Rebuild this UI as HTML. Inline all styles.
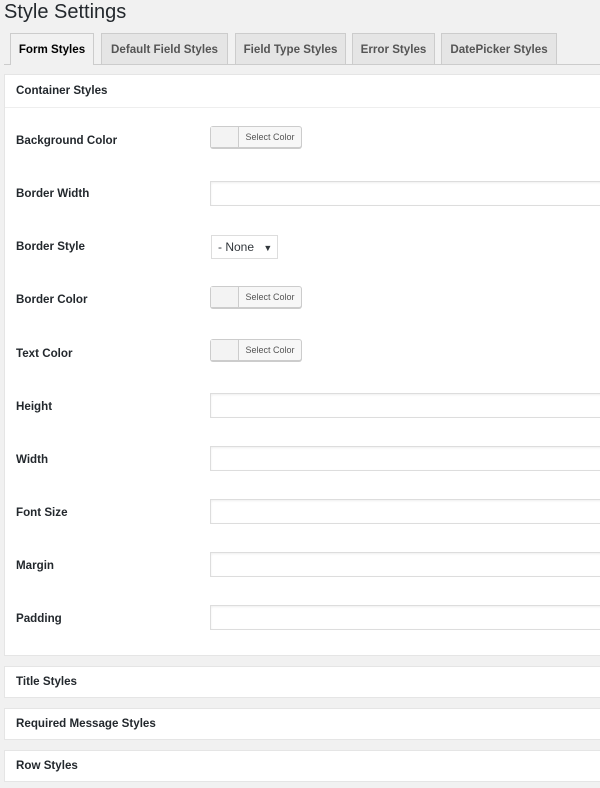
<!DOCTYPE html>
<html><head><style>
*{box-sizing:border-box;margin:0;padding:0}
body{width:600px;height:788px;overflow:hidden;background:#f1f1f1;font-family:"Liberation Sans",sans-serif;color:#23282d;position:relative}
h1{position:absolute;left:4px;top:0;font-size:20px;font-weight:normal;line-height:24px}
.tabline{position:absolute;left:4px;right:0;top:64px;border-top:1px solid #ccc}
.tab{position:absolute;top:33px;height:31px;border:1px solid #ccc;border-bottom:none;background:#e5e5e5;font-size:11.6px;font-weight:bold;color:#555;line-height:31px;text-align:center}
.tab.a{background:#f1f1f1;color:#000;height:32px}
.panel{position:absolute;left:4px;width:600px;background:#fff;border:1px solid #e5e5e5}
.ph{font-size:11.6px;font-weight:bold;padding-left:11px;line-height:30px}
.lab{position:absolute;left:16px;font-size:11.6px;font-weight:bold}
.inp{position:absolute;left:210px;width:400px;height:25px;border:1px solid #ddd;background:#fff;box-shadow:inset 0 1px 2px rgba(0,0,0,.07)}
.cp{position:absolute;left:210px;width:92px;height:22px;border:1px solid #ccc;border-radius:3px;background:#f7f7f7;box-shadow:0 1px 0 #ccc}
.cp span{position:absolute;left:0;top:0;width:28px;height:20px;border-right:1px solid #ccc;background:#f3f3f3}
.cp b{position:absolute;left:28px;right:0;top:0;line-height:20px;font-size:9px;font-weight:normal;color:#555;text-align:center}
.sel{position:absolute;left:211px;top:235px;width:67px;height:24px;border:1px solid #ddd;background:#fff;font-size:12px;color:#32373c;line-height:22px;padding-left:6px}
</style></head><body>
<h1>Style Settings</h1>
<div class="tabline"></div>
<div class="tab a" style="left:10px;width:84px">Form Styles</div>
<div class="tab" style="left:101px;width:127px">Default Field Styles</div>
<div class="tab" style="left:235px;width:111px">Field Type Styles</div>
<div class="tab" style="left:352px;width:83px">Error Styles</div>
<div class="tab" style="left:441px;width:116px">DatePicker Styles</div>

<div class="panel" style="top:74px;height:582px">
<div class="ph" style="border-bottom:1px solid #eee;height:33px;line-height:32px">Container Styles</div>
</div>
<div class="lab" style="top:134px">Background Color</div>
<div class="cp" style="top:126px"><span></span><b>Select Color</b></div>
<div class="lab" style="top:187px">Border Width</div>
<div class="inp" style="top:181px"></div>
<div class="lab" style="top:240px">Border Style</div>
<div class="sel">- None <span style="font-size:9px;margin-left:6px">▼</span></div>
<div class="lab" style="top:293px">Border Color</div>
<div class="cp" style="top:286px"><span></span><b>Select Color</b></div>
<div class="lab" style="top:347px">Text Color</div>
<div class="cp" style="top:339px"><span></span><b>Select Color</b></div>
<div class="lab" style="top:400px">Height</div>
<div class="inp" style="top:393px"></div>
<div class="lab" style="top:453px">Width</div>
<div class="inp" style="top:446px"></div>
<div class="lab" style="top:506px">Font Size</div>
<div class="inp" style="top:499px"></div>
<div class="lab" style="top:559px">Margin</div>
<div class="inp" style="top:552px"></div>
<div class="lab" style="top:612px">Padding</div>
<div class="inp" style="top:605px"></div>

<div class="panel" style="top:666px;height:32px"><div class="ph">Title Styles</div></div>
<div class="panel" style="top:708px;height:32px"><div class="ph">Required Message Styles</div></div>
<div class="panel" style="top:750px;height:32px"><div class="ph">Row Styles</div></div>
</body></html>
